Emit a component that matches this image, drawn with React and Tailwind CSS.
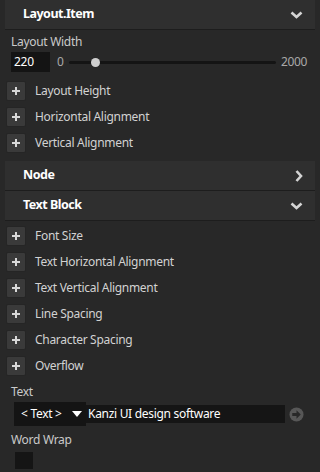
const FONT = { fontFamily: '"Noto Sans", "Open Sans", sans-serif' };

function ChevronDown() {
  return (
    <svg width="13" height="8" viewBox="0 0 13 8" className="text-[#d4d4d4]">
      <path d="M1.5 1.5 L6.5 6 L11.5 1.5" fill="none" stroke="currentColor" strokeWidth="2.6" />
    </svg>
  );
}

function ChevronRight() {
  return (
    <svg width="8" height="12" viewBox="0 0 8 12" className="text-[#d4d4d4]">
      <path d="M1.5 1 L6 6 L1.5 11" fill="none" stroke="currentColor" strokeWidth="2.6" />
    </svg>
  );
}

function SectionHeader({ title, open }) {
  return (
    <div className="mx-[5px] flex h-[30px] items-center justify-between border-b border-[#1d1d1d] bg-[#2f2f2f] pl-[18px] pr-[12px]">
      <span className="text-[12.5px] font-bold tracking-[-0.5px] text-white">{title}</span>
      {open ? <ChevronDown /> : <ChevronRight />}
    </div>
  );
}

function AddRow({ label }) {
  return (
    <div className="flex h-[26px] items-center pl-[6px]">
      <div className="flex h-[20px] w-[20px] items-center justify-center rounded-[2px] border border-[#252525] bg-[#3a3a3a] text-[#d8d8d8]">
        <svg width="10" height="10" viewBox="0 0 10 10">
          <path d="M5 1 V9 M1 5 H9" stroke="currentColor" strokeWidth="2" />
        </svg>
      </div>
      <span className="ml-[9px] text-[12px] tracking-[-0.3px] text-[#d2d2d2]">{label}</span>
    </div>
  );
}

export default function App() {
  return (
    <div className="h-[472px] w-[320px] overflow-hidden bg-[#282828]" style={FONT}>
      <SectionHeader title="Layout.Item" open />

      <div className="pl-[11px] pt-[3px]">
        <div className="h-[17px] text-[12px] leading-[17px] tracking-[-0.3px] text-[#cacaca]">Layout Width</div>
        <div className="mt-[2px] flex h-[20px] items-center">
          <div className="flex h-[20px] w-[39px] items-center bg-[#141414] pl-[3px] text-[12px] tracking-[-0.3px] text-white">220</div>
          <span className="ml-[7px] text-[12px] text-[#a8a8a8]">0</span>
          <div className="relative ml-[5px] h-[3px] w-[207px] rounded-full bg-[#141414]">
            <div className="absolute left-[22px] top-[-3px] h-[9px] w-[9px] rounded-full bg-[#cfcfcf]" />
          </div>
          <span className="ml-[5px] text-[12px] tracking-[-0.3px] text-[#a8a8a8]">2000</span>
        </div>
      </div>

      <div className="mt-[6px]">
        <AddRow label="Layout Height" />
        <AddRow label="Horizontal Alignment" />
        <AddRow label="Vertical Alignment" />
      </div>

      <div className="mt-[5px]">
        <SectionHeader title="Node" />
        <SectionHeader title="Text Block" open />
      </div>

      <div className="mt-[2px]">
        <AddRow label="Font Size" />
        <AddRow label="Text Horizontal Alignment" />
        <AddRow label="Text Vertical Alignment" />
        <AddRow label="Line Spacing" />
        <AddRow label="Character Spacing" />
        <AddRow label="Overflow" />
      </div>

      <div className="pl-[11px]">
        <div className="mt-[4px] h-[17px] text-[12px] leading-[17px] tracking-[-0.3px] text-[#cacaca]">Text</div>
        <div className="mt-[2px] flex items-center pl-[3px]">
          <div className="flex h-[24px] w-[72px] items-center bg-[#141414] pl-[7px] text-[12px] tracking-[-0.3px] text-white">
            <span>&lt; Text &gt;</span>
            <svg width="10" height="6" viewBox="0 0 10 6" className="ml-[10px]">
              <path d="M0 0 H10 L5 6 Z" fill="#ffffff" />
            </svg>
          </div>
          <div className="flex h-[18px] w-[199px] items-center bg-[#151515] pl-[2px] text-[12px] tracking-[-0.3px] text-white">
            Kanzi UI design software
          </div>
          <svg width="15" height="15" viewBox="0 0 16 16" className="ml-[4px]">
            <circle cx="8" cy="8" r="7.5" fill="#575757" />
            <path d="M3.5 6.5 H8 V3.5 L12.5 8 L8 12.5 V9.5 H3.5 Z" fill="#282828" />
          </svg>
        </div>
        <div className="mt-[5px] h-[17px] text-[12px] leading-[17px] tracking-[-0.3px] text-[#cacaca]">Word Wrap</div>
        <div className="ml-[4px] mt-[4px] h-[17px] w-[18px] bg-[#151515]" />
      </div>
    </div>
  );
}
